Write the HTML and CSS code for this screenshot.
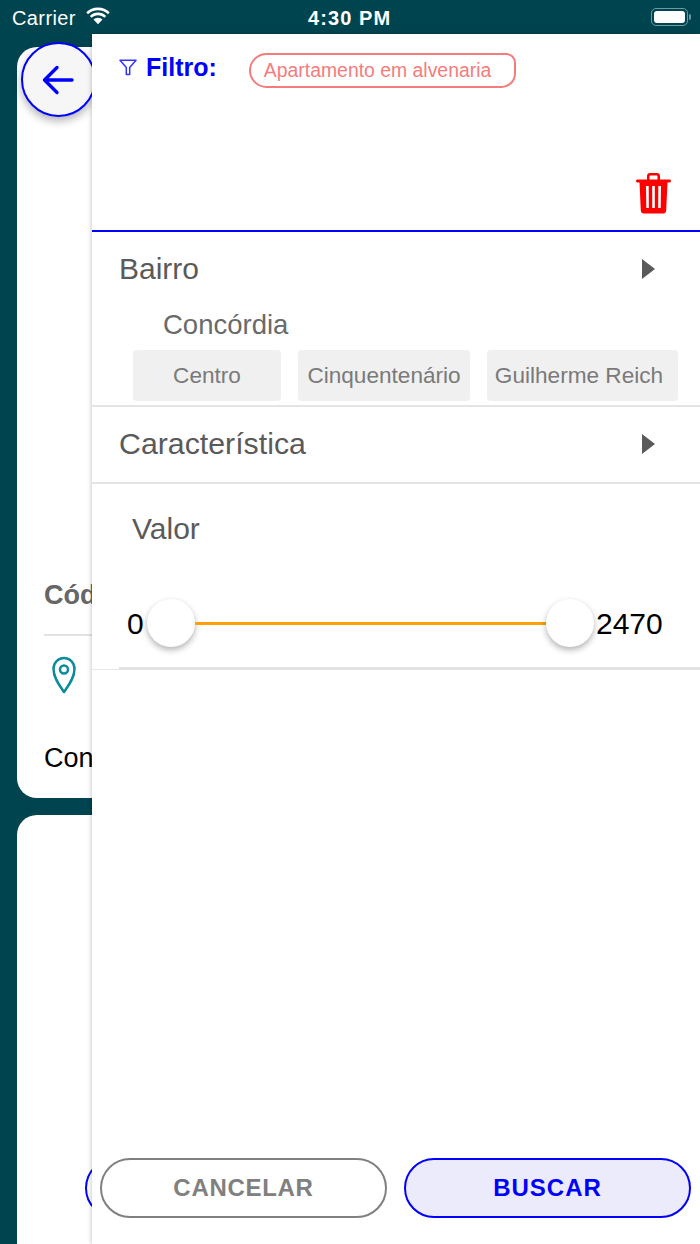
FILE: index.html
```html
<!DOCTYPE html>
<html lang="pt-br">
<head>
    <meta charset="UTF-8">
    <meta name="viewport" content="width=device-width, initial-scale=1.0">
    <title>Filtro</title>
    <link rel="stylesheet" href="styles.css">
</head>
<body>
    <div class="screen">
        <div class="status-bar">
            <div class="status-left">
                <span class="carrier">Carrier</span>
                <svg class="wifi" width="26" height="18" viewBox="0 0 26 18">
                    <path d="M13 3.2c3.9 0 7.4 1.5 10 4l1.7-1.9C21.7 2.2 17.6.5 13 .5S4.300 2.200 1.300 5.300L3 7.200c2.600-2.500 6.100-4 10-4z" fill="#fff"/>
                    <path d="M13 8.300c2.500 0 4.700 1 6.400 2.500l1.800-1.900C19 6.800 16.200 5.600 13 5.600s-6 1.200-8.200 3.300l1.800 1.900C8.300 9.300 10.500 8.300 13 8.300z" fill="#fff"/>
                    <path d="M13 10.800c-1.700 0-3.300.7-4.500 1.800L13 17.300l4.500-4.700c-1.200-1.100-2.800-1.800-4.500-1.800z" fill="#fff"/>
                </svg>
            </div>
            <span class="clock">4:30 PM</span>
            <div class="battery">
                <div class="battery-body"><div class="battery-fill"></div></div>
                <div class="battery-tip"></div>
            </div>
        </div>

        <div class="list">
            <div class="card card-first">
                <span class="card-code">Cód</span>
                <div class="card-line"></div>
                <svg class="pin" width="28" height="40" viewBox="0 0 28 40">
                    <path d="M14 37C9.500 30.500 3.500 23 3.500 14 3.500 8 8 3 14 3s10.500 5 10.500 11c0 9-6 16.500-10.500 23z" fill="none" stroke="#0b8c9b" stroke-width="2.500" stroke-linejoin="round"/>
                    <circle cx="14" cy="14.500" r="4" fill="none" stroke="#0b8c9b" stroke-width="2.500"/>
                </svg>
                <span class="card-city">Con</span>
            </div>
            <div class="card card-second"></div>
        </div>

        <button type="button" class="back-button">
            <svg width="32" height="30" viewBox="0 0 32 30">
                <path d="M30 15H3M15 2.500 2.500 15 15 27.500" fill="none" stroke="#0000ff" stroke-width="3.400" stroke-linecap="round" stroke-linejoin="round"/>
            </svg>
        </button>
        <div class="round-peek"></div>

        <div class="drawer">
            <div class="filter-head">
                <div class="filter-row">
                    <svg class="funnel" width="18" height="17" viewBox="0 0 18 17">
                        <path d="M1 1.200h16l-6.300 7.300V15.500H7.300V8.500z" fill="none" stroke="#3333ff" stroke-width="1.500" stroke-linejoin="round"/>
                    </svg>
                    <span class="filter-title">Filtro:</span>
                    <span class="filter-chip">Apartamento em alvenaria</span>
                </div>
                <div class="trash-row">
                    <svg width="35" height="42" viewBox="0 0 35 42">
                        <path d="M11 7.500V4C11 2.300 12.300 1 14 1h7C22.700 1 24 2.300 24 4V7.500h9.500c.8 0 1.500.6 1.500 1.500S34.300 10.500 33.500 10.500h-32C.7 10.500 0 9.900 0 9S.7 7.500 1.500 7.500zM13.500 7.500h8V4.500C21.500 3.900 21.100 3.500 20.500 3.500h-6C13.900 3.500 13.500 3.900 13.500 4.500z" fill="#ff0000" fill-rule="evenodd"/>
                        <path d="M3.500 10h28l-1.300 28.500c-.1 1.800-1.300 3-3 3H7.800c-1.700 0-2.900-1.200-3-3zM10 14l.3 22h2.500L12.700 14zM16.200 14v22h2.600V14zM22.300 14l-.1 22h2.500L25 14z" fill="#ff0000" fill-rule="evenodd"/>
                    </svg>
                </div>
            </div>

            <div class="section section-bairro">
                <div class="section-head">
                    <span class="section-title">Bairro</span>
                    <div class="arrow"></div>
                </div>
                <div class="city-name">Concórdia</div>
                <div class="chips">
                    <span class="chip chip-centro">Centro</span>
                    <span class="chip chip-cinq">Cinquentenário</span>
                    <span class="chip chip-guilherme">Guilherme Reich</span>
                </div>
            </div>

            <div class="section section-carac">
                <div class="section-head">
                    <span class="section-title title-carac">Característica</span>
                    <div class="arrow"></div>
                </div>
            </div>

            <div class="value-wrap">
                <div class="value-box">
                    <div class="value-title">Valor</div>
                    <div class="slider-row">
                        <span class="slider-min">0</span>
                        <div class="thumb"></div>
                        <div class="track"></div>
                        <div class="thumb"></div>
                        <span class="slider-max">2470</span>
                    </div>
                </div>
            </div>

            <div class="actions">
                <button type="button" class="btn btn-cancel">CANCELAR</button>
                <button type="button" class="btn btn-search">BUSCAR</button>
            </div>
        </div>
    </div>
</body>
</html>
```

FILE: styles.css
```css
*{
    margin: 0;
    padding: 0;
    box-sizing: border-box;
}

body{
    background-color: #00444f;
    font-family: "Liberation Sans", Arial, sans-serif;
}

.screen{
    position: relative;
    display: flex;
    flex-direction: column;
    width: 700px;
    height: 1244px;
    overflow: hidden;
    background-color: #00444f;
}

.status-bar{
    display: flex;
    align-items: center;
    height: 34px;
    padding: 0 9px 0 12px;
    color: #fff;
}

.status-left{
    display: flex;
    align-items: center;
    gap: 9px;
    width: 296px;
}

.carrier{
    padding-top: 2px;
    font-size: 20px;
    letter-spacing: 0.4px;
}

.wifi{
    margin-bottom: 3px;
}

.clock{
    padding-top: 2px;
    font-size: 20px;
    font-weight: bold;
    letter-spacing: 1.1px;
}

.battery{
    display: flex;
    align-items: center;
    gap: 1px;
    margin-left: auto;
}

.battery-body{
    width: 37px;
    height: 18px;
    padding: 2px;
    border: 1.500px solid #6f9aa0;
    border-radius: 5px;
}

.battery-fill{
    height: 100%;
    background-color: #fff;
    border-radius: 3px;
}

.battery-tip{
    width: 2px;
    height: 6px;
    background-color: #6f9aa0;
    border-radius: 0 2px 2px 0;
}

.list{
    display: flex;
    flex: 1;
    flex-direction: column;
    gap: 17px;
    padding: 13px 17px 0;
}

.card{
    background-color: #fff;
    border-radius: 20px 20px 0 0;
}

.card-first{
    display: flex;
    flex-direction: column;
    height: 751px;
    padding: 533px 27px 0;
    border-radius: 20px;
}

.card-code{
    font-size: 27px;
    font-weight: bold;
    line-height: 30px;
    color: #666;
}

.card-line{
    height: 2px;
    margin-top: 24px;
    background-color: #e2e2e2;
}

.pin{
    margin: 19px 0 0 6px;
}

.card-city{
    margin-top: 47px;
    font-size: 27px;
    line-height: 32px;
    color: #000;
}

.card-second{
    flex: 1;
}

.back-button{
    position: absolute;
    top: 42px;
    left: 21px;
    display: flex;
    align-items: center;
    justify-content: center;
    width: 75px;
    height: 75px;
    padding-right: 1px;
    background-color: #f6f6f6;
    border: 2px solid #0000ff;
    border-radius: 50%;
    box-shadow: 0 4px 8px rgba(0, 0, 0, 0.3);
}

.round-peek{
    position: absolute;
    top: 1158px;
    left: 85px;
    width: 60px;
    height: 60px;
    border: 2px solid #0000ff;
    border-radius: 50%;
}

.drawer{
    position: absolute;
    top: 34px;
    left: 92px;
    right: 0;
    bottom: 0;
    display: flex;
    flex-direction: column;
    background-color: #fff;
    box-shadow: -1px 0 4px rgba(0, 0, 0, 0.2);
}

.filter-head{
    height: 198px;
    padding: 19px 29px 0 27px;
    border-bottom: 2px solid #0000ff;
}

.filter-row{
    display: flex;
    align-items: flex-start;
}

.funnel{
    margin: 6px 9px 0 0;
}

.filter-title{
    font-size: 25px;
    font-weight: bold;
    line-height: 28px;
    color: #0000ff;
}

.filter-chip{
    width: 267px;
    height: 35px;
    margin-left: 32px;
    padding-left: 13px;
    font-size: 19.400px;
    line-height: 31px;
    color: #f47c7c;
    border: 2px solid #f47c7c;
    border-radius: 18px 10px 15px 18px;
}

.trash-row{
    display: flex;
    justify-content: flex-end;
    margin-top: 84px;
}

.section{
    padding: 0 0 0 27px;
    border-bottom: 2px solid #e4e4e4;
}

.section-head{
    display: flex;
    justify-content: space-between;
    align-items: center;
    height: 74px;
    padding-right: 45px;
}

.section-bairro{
    height: 175px;
}

.section-carac{
    height: 77px;
}

.section-title{
    font-size: 30px;
    color: #5a5a5a;
}

.title-carac{
    font-size: 30.300px;
}

.arrow{
    width: 0;
    height: 0;
    border-top: 10px solid transparent;
    border-bottom: 10px solid transparent;
    border-left: 13px solid #5a5a5a;
}

.city-name{
    margin: 3px 0 0 44px;
    font-size: 27.500px;
    line-height: 32px;
    color: #6a6a6a;
}

.chips{
    display: flex;
    gap: 17px;
    margin: 9px 0 0 14px;
}

.chip{
    height: 51px;
    font-size: 22.600px;
    line-height: 52px;
    text-align: center;
    color: #7a7a7a;
    background-color: #f0f0f0;
    border-radius: 4px;
}

.chip-centro{
    width: 148px;
}

.chip-cinq{
    width: 172px;
}

.chip-guilherme{
    width: 191px;
    padding-right: 7px;
}

.value-wrap{
    border-bottom: 1px solid #e8e8e8;
}

.value-box{
    margin-left: 27px;
    margin-bottom: -1px;
    border-bottom: 3px solid #e2e2e2;
}

.value-title{
    margin: 28px 0 0 13px;
    font-size: 30px;
    line-height: 34px;
    color: #5a5a5a;
}

.slider-row{
    display: flex;
    align-items: center;
    height: 48px;
    margin-top: 53px;
    margin-bottom: 20px;
    padding-left: 8px;
    font-size: 30px;
    color: #000;
}

.slider-min{
    width: 20px;
    padding-top: 2px;
}

.thumb{
    flex: none;
    width: 48px;
    height: 48px;
    background-color: #fff;
    border-radius: 50%;
    box-shadow: 0 3px 6px rgba(0, 0, 0, 0.3);
}

.track{
    width: 351px;
    height: 3px;
    background-color: #ff9f0a;
}

.slider-max{
    margin-left: 2px;
    padding-top: 2px;
}

.actions{
    display: flex;
    gap: 17px;
    margin-top: auto;
    padding: 0 9px 26px 8px;
}

.btn{
    flex: 1;
    height: 60px;
    font-family: "Liberation Sans", Arial, sans-serif;
    font-size: 24px;
    font-weight: bold;
    letter-spacing: 1px;
    border-radius: 30px;
}

.btn-cancel{
    color: #808080;
    letter-spacing: 0.7px;
    background-color: #fff;
    border: 2px solid #808080;
}

.btn-search{
    color: #0000ff;
    background-color: #ebebfb;
    border: 2px solid #0000ff;
}
```
